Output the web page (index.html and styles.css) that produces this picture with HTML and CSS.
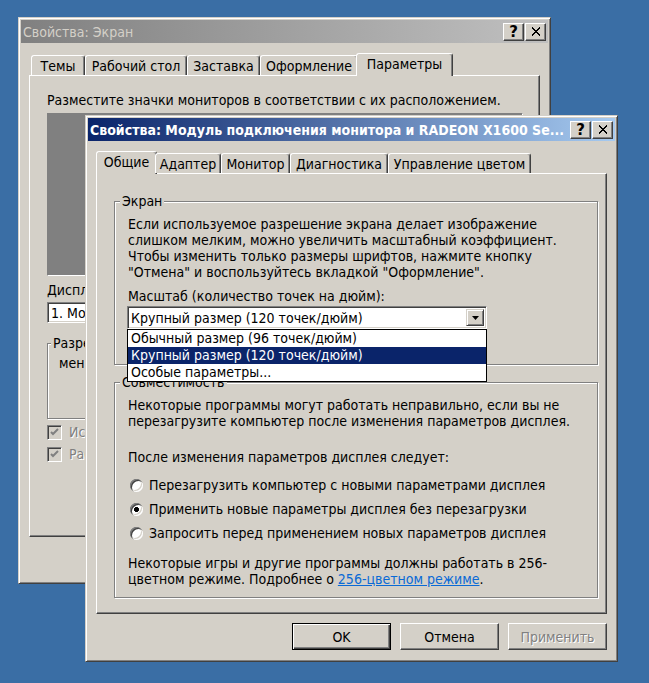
FILE: index.html
```html
<!DOCTYPE html>
<html lang="ru">
<head>
    <meta charset="UTF-8">
    <meta name="viewport" content="width=device-width, initial-scale=1.0">
    <title>Свойства: Экран</title>
    <link rel="stylesheet" href="styles.css">
</head>
<body>
<div class="desktop">
    <!-- задний диалог -->
    <div class="window back-window">
        <div class="titlebar inactive">
            <span class="caption">Свойства: Экран</span>
            <div class="cap-buttons">
                <span class="cap-btn">?</span>
                <span class="cap-btn"><svg width="10" height="9" viewBox="0 0 10 9" shape-rendering="crispEdges"><path d="M1 0.5L9 8.5M9 0.5L1 8.5" stroke="#000" stroke-width="2"/></svg></span>
            </div>
        </div>
        <div class="window-body">
            <div class="tabs">
                <span class="tab tab-themes">Темы</span>
                <span class="tab tab-desktop">Рабочий стол</span>
                <span class="tab tab-saver">Заставка</span>
                <span class="tab tab-appear">Оформление</span>
                <span class="tab active tab-params">Параметры</span>
            </div>
            <div class="panel back-panel">
                <p class="text">Разместите значки мониторов в соответствии с их расположением.</p>
                <div class="monitor-area"></div>
                <p class="text display-label">Дисплей:</p>
                <div class="combo display-combo">
                    <span class="combo-value">1. Модуль</span>
                </div>
                <div class="back-groups">
                    <fieldset class="group res-group">
                        <legend>Разрешение</legend>
                        <p class="text">меньше</p>
                    </fieldset>
                </div>
                <label class="check-row disabled"><span class="check"></span>Использовать</label>
                <label class="check-row disabled second"><span class="check"></span>Расширить</label>
            </div>
        </div>
    </div>

    <!-- передний диалог -->
    <div class="window front-window">
        <div class="titlebar">
            <span class="caption">Свойства: Модуль подключения монитора и RADEON X1600 Se...</span>
            <div class="cap-buttons">
                <span class="cap-btn">?</span>
                <span class="cap-btn"><svg width="10" height="9" viewBox="0 0 10 9" shape-rendering="crispEdges"><path d="M1 0.5L9 8.5M9 0.5L1 8.5" stroke="#000" stroke-width="2"/></svg></span>
            </div>
        </div>
        <div class="window-body">
            <div class="tabs">
                <span class="tab active tab-general">Общие</span>
                <span class="tab tab-adapter">Адаптер</span>
                <span class="tab tab-monitor">Монитор</span>
                <span class="tab tab-diag">Диагностика</span>
                <span class="tab tab-color">Управление цветом</span>
            </div>
            <div class="panel">
                <fieldset class="group screen-group">
                    <legend>Экран</legend>
                    <p class="text">Если используемое разрешение экрана делает изображение<br>слишком мелким, можно увеличить масштабный коэффициент.<br>Чтобы изменить только размеры шрифтов, нажмите кнопку<br>"Отмена" и воспользуйтесь вкладкой "Оформление".</p>
                    <p class="text scale-label">Масштаб (количество точек на дюйм):</p>
                    <div class="combo dpi-combo">
                        <span class="combo-value">Крупный размер (120 точек/дюйм)</span>
                        <span class="drop-btn"><svg width="7" height="4" viewBox="0 0 7 4"><path d="M0 0H7L3.5 4Z" fill="#000"/></svg></span>
                        <ul class="drop-list">
                            <li>Обычный размер (96 точек/дюйм)</li>
                            <li class="selected">Крупный размер (120 точек/дюйм)</li>
                            <li>Особые параметры...</li>
                        </ul>
                    </div>
                </fieldset>
                <fieldset class="group compat-group">
                    <legend>Совместимость</legend>
                    <p class="text">Некоторые программы могут работать неправильно, если вы не<br>перезагрузите компьютер после изменения параметров дисплея.</p>
                    <p class="text after-label">После изменения параметров дисплея следует:</p>
                    <div class="radios">
                        <label class="radio-row"><span class="radio"></span>Перезагрузить компьютер с новыми параметрами дисплея</label>
                        <label class="radio-row"><span class="radio checked"></span>Применить новые параметры дисплея без перезагрузки</label>
                        <label class="radio-row"><span class="radio"></span>Запросить перед применением новых параметров дисплея</label>
                    </div>
                    <p class="text games-note">Некоторые игры и другие программы должны работать в 256-<br>цветном режиме. Подробнее о <a href="#" class="link">256-цветном режиме</a>.</p>
                </fieldset>
            </div>
            <div class="buttons">
                <button class="btn default">OK</button>
                <button class="btn">Отмена</button>
                <button class="btn" disabled>Применить</button>
            </div>
        </div>
    </div>
</div>
</body>
</html>
```

FILE: styles.css
```css
*{
    box-sizing: border-box;
}
body{
    margin: 0;
    background: #3a6ea5;
    font-family: "DejaVu Sans Condensed", "Liberation Sans", sans-serif;
    font-size: 14px;
    line-height: 16px;
    color: #000;
}
.desktop{
    position: relative;
    width: 649px;height: 683px;
    overflow: hidden;
}
/* окна */
.window{
    position: absolute;
    width: 533px;
    display: flex;
    flex-direction: column;
    padding: 2px;
    background: #d4d0c8;
    border: 1px solid;
    border-color: #d4d0c8 #404040 #404040 #d4d0c8;
    box-shadow: inset 1px 1px #fff, inset -1px -1px #808080;
}
.back-window{
    left: 18px;top: 17px;
    height: 567px;
}
.front-window{
    left: 85px;top: 115px;
    height: 547px;
}
.titlebar{
    height: 23px;
    flex: none;
    display: flex;
    align-items: center;
    padding: 0 2px 0 2px;
    background: linear-gradient(to right, #0a246a, #a6caf0);
    color: #fff;
    font-weight: bold;
}
.titlebar.inactive{
    background: linear-gradient(to right, #808080, #c0c0c0);
    color: #d4d0c8;
    font-weight: normal;
}
.caption{
    flex: 1;
    white-space: nowrap;
    overflow: hidden;
}
.cap-buttons{
    display: flex;
    gap: 1px;
}
.cap-btn{
    width: 21px;height: 18px;
    display: flex;
    align-items: center;
    justify-content: center;
    background: #d4d0c8;
    color: #000;
    font-size: 15px;
    font-family: "DejaVu Sans", sans-serif;
    font-weight: bold;
    border: 1px solid;
    border-color: #fff #404040 #404040 #fff;
    box-shadow: inset -1px -1px #808080;
}
.window-body{
    flex: 1;
    display: flex;
    flex-direction: column;
    padding: 10px 8px 0 8px;
}
/* вкладки */
.tabs{
    height: 22px;
    display: flex;
    align-items: flex-end;
    padding-left: 2px;
    position: relative;
    z-index: 1;
}
.tab{
    height: 20px;
    display: flex;
    align-items: center;
    justify-content: center;
    white-space: nowrap;
    background: #d4d0c8;
    border: 1px solid;
    border-bottom: none;
    border-color: #fff #404040 transparent #fff;
    border-radius: 3px 3px 0 0;
    box-shadow: inset -1px 0 #808080;
}
.tab.active{
    height: 23px;
    margin: 0 -2px -1px;
    padding-bottom: 2px;
}
.tab-themes{width: 54px;}
.tab-desktop{width: 102px;}
.tab-saver{width: 73px;}
.tab-appear{width: 98px;}
.tab-params{width: 97px;}
.tab-general{width: 61px;}
.tab-adapter{width: 66px;}
.tab-monitor{width: 69px;}
.tab-diag{width: 98px;}
.tab-color{width: 143px;}
.panel{
    height: 441px;
    flex: none;
    padding: 19px 0 0 17px;
    border: 1px solid;
    border-color: #fff #404040 #404040 #fff;
    box-shadow: inset -1px -1px #808080;
}
.back-panel{
    height: 462px;
    padding: 16px 0 0 17px;
}
.text{
    margin: 0;
    white-space: nowrap;
}
/* рамки групп */
.group{
    margin: 0;
    min-width: 0;
    width: 484px;
    border: 1px solid #808080;
    box-shadow: inset 1px 1px #fff, 1px 1px #fff;
}
.group legend{
    margin-left: -8px;
    padding: 0 2px;
    background: #d4d0c8;
    white-space: nowrap;
}
.screen-group{
    height: 172px;
    padding: 7px 13px 0 13px;
}
.compat-group{
    margin-top: 9px;
    height: 224px;
    padding: 7px 13px 0 13px;
}
.scale-label{
    margin-top: 8px;
}
/* выпадающий список */
.combo{
    position: relative;
    height: 23px;
    display: flex;
    align-items: stretch;
    padding: 2px;
    background: #fff;
    border: 1px solid;
    border-color: #808080 #fff #fff #808080;
    box-shadow: inset 1px 1px #404040, inset -1px -1px #d4d0c8;
}
.dpi-combo{
    width: 360px;
    margin: 2px 0 0 -1px;
}
.combo-value{
    flex: 1;
    padding-left: 1px;
    display: flex;
    align-items: center;
    white-space: nowrap;
    overflow: hidden;
}
.drop-btn{
    width: 18px;
    flex: none;
    display: flex;
    align-items: center;
    justify-content: center;
    background: #d4d0c8;
    border: 1px solid;
    border-color: #d4d0c8 #404040 #404040 #d4d0c8;
    box-shadow: inset 1px 1px #fff, inset -1px -1px #808080;
}
.drop-list{
    position: absolute;
    left: -1px;top: 22px;
    width: 360px;
    margin: 0;
    padding: 0;
    list-style: none;
    background: #fff;
    border: 1px solid #000;
    z-index: 2;
}
.drop-list li{
    height: 17px;
    line-height: 17px;
    padding-left: 3px;
    white-space: nowrap;
}
.drop-list li.selected{
    background: #0a246a;
    color: #fff;
}
/* переключатели */
.after-label{
    margin-top: 20px;
}
.radios{
    margin-top: 12px;
    display: flex;
    flex-direction: column;
    gap: 8px;
}
.radio-row{
    display: flex;
    align-items: center;
    gap: 6px;
    height: 16px;
    white-space: nowrap;
}
.radio{
    width: 13px;height: 13px;
    margin-left: 2px;
    flex: none;
    border-radius: 50%;
    background: #fff;
    box-shadow: inset 1px 1px #808080, inset 2px 2px #404040, inset -1px -1px #fff, inset -2px -2px #d4d0c8;
}
.radio.checked{
    background: radial-gradient(circle, #000 0 2.2px, #fff 2.8px);
}
.games-note{
    margin-top: 14px;
}
.link{
    color: #0a6ad6;
}
/* кнопки */
.buttons{
    margin-top: 9px;
    display: flex;
    justify-content: flex-end;
    gap: 9px;
}
.btn{
    width: 99px;height: 27px;
    padding: 0;
    font: inherit;
    color: #000;
    background: #d4d0c8;
    border: 1px solid;
    border-color: #fff #404040 #404040 #fff;
    box-shadow: inset -1px -1px #808080, inset 1px 1px #d4d0c8;
}
.btn.default{
    border-color: #000;
    box-shadow: inset 1px 1px #fff, inset -1px -1px #404040, inset -2px -2px #808080;
}
.btn:disabled{
    color: #808080;
    text-shadow: 1px 1px #fff;
}
/* задний диалог */
.monitor-area{
    width: 476px;height: 163px;
    margin-top: 5px;
    background: #808080;
    border: 1px solid;
    border-color: #808080 #fff #fff #808080;
}
.display-label{
    margin-top: 6px;
}
.display-combo{
    width: 476px;
    height: 21px;
    margin-top: 4px;
}
.back-groups{
    margin-top: 12px;
    display: flex;
}
.back-groups .group{
    width: 233px;
    height: 84px;
    padding: 4px 11px 0 11px;
}
.check-row{
    display: flex;
    align-items: center;
    gap: 7px;
    height: 16px;
    margin-top: 5px;
    white-space: nowrap;
}
.check-row.second{
    margin-top: 6px;
}
.check{
    width: 15px;height: 15px;
    flex: none;
    border: 1px solid;
    border-color: #808080 #fff #fff #808080;
    box-shadow: inset 1px 1px #404040, inset -1px -1px #d4d0c8;
    background: #d4d0c8 url("data:image/svg+xml,%3Csvg xmlns='http://www.w3.org/2000/svg' width='13' height='13'%3E%3Cpath d='M3 6l2 2 5-5' fill='none' stroke='%23808080' stroke-width='2'/%3E%3C/svg%3E") center no-repeat;
}
.check-row.disabled{
    color: #808080;
    text-shadow: 1px 1px #fff;
}
```
